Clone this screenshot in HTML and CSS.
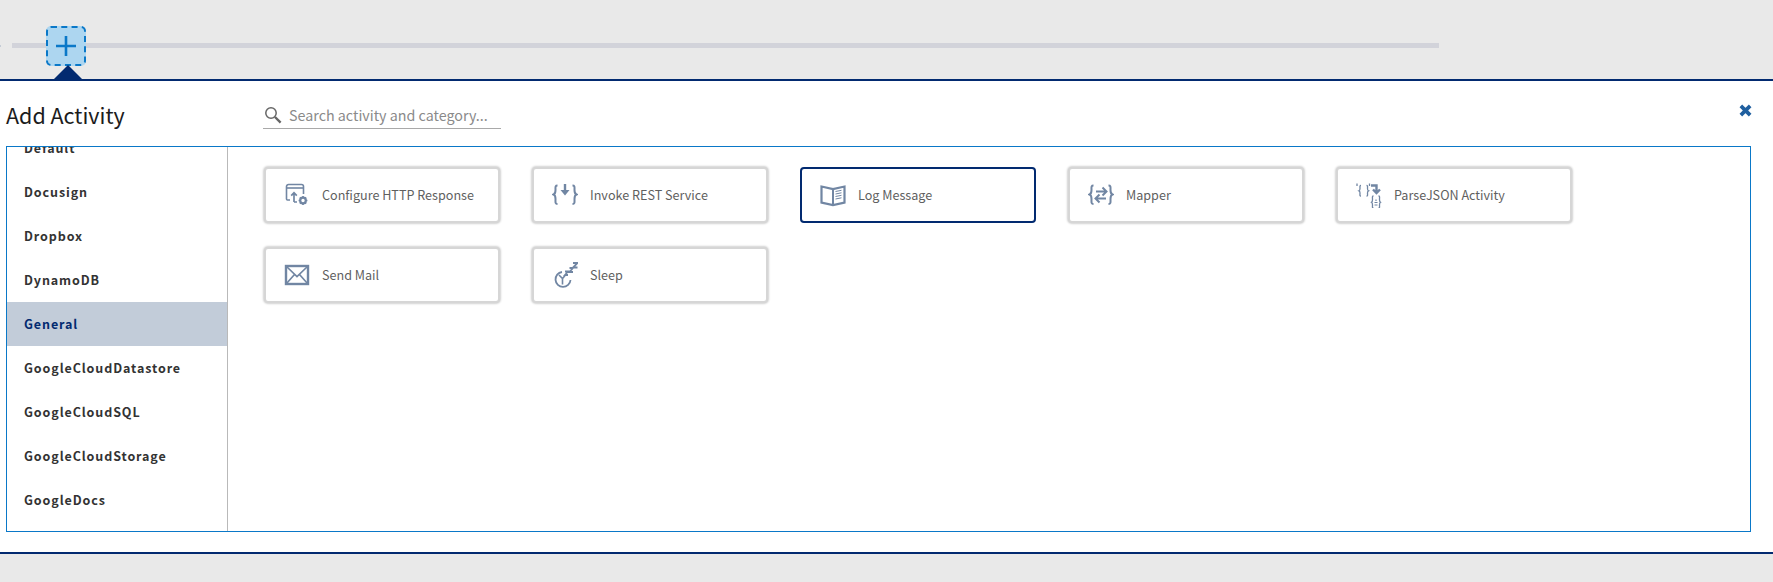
FILE: index.html
```html
<!DOCTYPE html>
<html lang="en">
  <head>
    <meta charset="UTF-8" />
    <title>Add Activity</title>
    <link rel="stylesheet" href="styles.css">
  </head>
  <body>
    <div class="flow-band">
      <span class="track-stub"></span>
      <div class="track"></div>
      <button class="add-btn" type="button">
        <svg width="22" height="22" viewBox="0 0 22 22"><path d="M11 1v20M1 11h20" stroke="#0a78c8" stroke-width="2.600" fill="none"/></svg>
      </button>
      <span class="pointer"></span>
    </div>

    <section class="panel">
      <div class="panel-head">
        <h1>Add Activity</h1>
        <label class="search">
          <svg width="18" height="18" viewBox="0 0 18 18"><circle cx="7" cy="7" r="5.200" stroke="#666" stroke-width="1.500" fill="none"/><path d="M11 11l5.600 5.600" stroke="#666" stroke-width="2.400" fill="none"/></svg>
          <input type="text" placeholder="Search activity and category..." />
        </label>
        <button class="close-btn" type="button" aria-label="Close">
          <svg width="13" height="13" viewBox="0 0 12 12"><path d="M1.700 1.700l8.600 8.600M10.300 1.700l-8.600 8.600" stroke="#1f5f9f" stroke-width="3.400" fill="none"/></svg>
        </button>
      </div>

      <div class="picker">
        <div class="categories">
          <ul>
            <li>Default</li>
            <li>Docusign</li>
            <li>Dropbox</li>
            <li>DynamoDB</li>
            <li class="active">General</li>
            <li>GoogleCloudDatastore</li>
            <li>GoogleCloudSQL</li>
            <li>GoogleCloudStorage</li>
            <li>GoogleDocs</li>
          </ul>
        </div>

        <div class="activities">
          <div class="card">
            <svg class="icon" viewBox="0 0 26 26">
              <path d="M6 18H3.500a1 1 0 0 1-1-1V4.500a2 2 0 0 1 2-2h13a2 2 0 0 1 2 2V12" fill="none" stroke-width="1.600"/>
              <path d="M2.500 6h17" fill="none" stroke-width="1.600"/>
              <path d="M10 20v-9M7.200 13.600L10 10.800l2.800 2.800M10 20h3" fill="none" stroke-width="1.700"/>
              <circle cx="19" cy="18.500" r="2.800" fill="none" stroke-width="2.200"/>
              <path d="M19 14v1.500M19 21.500V23M14.600 18.500h1.500M21.900 18.500h1.500M15.900 15.400l1 1M21.100 20.600l1 1M22.100 15.400l-1 1M16.900 20.600l-1 1" fill="none" stroke-width="1.700"/>
            </svg>
            <span>Configure HTTP Response</span>
          </div>
          <div class="card">
            <svg class="icon" viewBox="0 0 26 26">
              <path d="M5.500 3.500c-2.500 0-2 1.500-2 4.500 0 3-.5 4-2 4.500 1.500.5 2 1.500 2 4.500s-.5 5 2 5M20.500 3.500c2.500 0 2 1.500 2 4.500 0 3 .5 4 2 4.500-1.500.5-2 1.500-2 4.500s.5 5-2 5" fill="none" stroke-width="2"/>
              <path d="M13 2v8" fill="none" stroke-width="2.400"/>
              <path d="M8.500 8h9L13 13.500z" stroke="none" fill="#7186a3"/>
            </svg>
            <span>Invoke REST Service</span>
          </div>
          <div class="card selected">
            <svg class="icon" viewBox="0 0 26 26">
              <path d="M1.500 4.500l11.500 2.500 11.500-2.500v16l-11.500 2.500-11.500-2.500z" fill="none" stroke-width="2.200"/>
              <path d="M13 7v16" fill="none" stroke-width="2"/>
              <path d="M15.500 9.500l6-1.200M15.500 12l6-1.200M15.500 14.500l6-1.200M15.500 17l6-1.200" fill="none" stroke-width="1"/>
            </svg>
            <span>Log Message</span>
          </div>
          <div class="card">
            <svg class="icon" viewBox="0 0 26 26">
              <path d="M5.500 3.500c-2.500 0-2 1.500-2 4.500 0 3-.5 4-2 4.500 1.500.5 2 1.500 2 4.500s-.5 5 2 5M20.500 3.500c2.500 0 2 1.500 2 4.500 0 3 .5 4 2 4.500-1.500.5-2 1.500-2 4.500s.5 5-2 5" fill="none" stroke-width="2"/>
              <path d="M8 9.500h9.500M14.500 5.500l4 4-4 4M18 16.500H8.500M11.500 12.500l-4 4 4 4" fill="none" stroke-width="2"/>
            </svg>
            <span>Mapper</span>
          </div>
          <div class="card">
            <svg class="icon" viewBox="0 0 26 26">
              <path d="M5 3.500c-1.500 0-1 1.500-1 3s-.3 2-1 2.300c.7.3 1 .8 1 2.300s-.5 3 1 3M10.500 3.500c1.500 0 1 1.500 1 3s.3 2 1 2.300c-.7.3-1 .8-1 2.300s.5 3-1 3" fill="none" stroke-width="1.300"/>
              <path d="M1 1.500v2.500M13.500 1.500v2.500" fill="none" stroke-width="1.300"/>
              <path d="M15 3.500h5.500v7M17 7.500l3.500 3.500 3.500-3.500" fill="none" stroke-width="2.400"/>
              <path d="M17.500 14c-1.500 0-1 1.500-1 3.500s-.5 2.500-1 2.800c.5.3 1 .8 1 2.800s-.5 2.900 1 2.900M22.500 14c1.500 0 1 1.500 1 3.500s.5 2.500 1 2.800c-.5.3-1 .8-1 2.800s.5 2.900-1 2.900" fill="none" stroke-width="1.300"/>
              <path d="M20 17.500v1.500M18.500 20.500h3M18.500 23h3" fill="none" stroke-width="1.200"/>
            </svg>
            <span>ParseJSON Activity</span>
          </div>
          <div class="card">
            <svg class="icon" viewBox="0 0 26 26">
              <rect x="2" y="4" width="22" height="18" fill="none" stroke-width="2.400"/>
              <path d="M2.500 4.500l10.500 10 10.500-10M2.500 21.500l8-9M23.500 21.500l-8-9" fill="none" stroke-width="1.700"/>
            </svg>
            <span>Send Mail</span>
          </div>
          <div class="card">
            <svg class="icon" viewBox="0 0 26 26">
              <path d="M10 10a7.500 7.500 0 1 0 8.500 8" fill="none" stroke-width="1.800"/>
              <path d="M7 13l3.500 3.500 3-3.500M10.500 16.500v6" fill="none" stroke-width="1.600"/>
              <path d="M13 9.500h3l-3 3.500h3M17.500 6h3.500l-3.500 4h3.500M21 1h4.500l-4.500 4.500h4.500" fill="none" stroke-width="1.800"/>
            </svg>
            <span>Sleep</span>
          </div>
        </div>
      </div>
    </section>

    <div class="foot-band"></div>
  </body>
</html>
```

FILE: styles.css
```css
* {
  box-sizing: border-box;
}

body {
  font-family: "Noto Sans CJK SC", "Noto Sans", sans-serif;
  margin: 0;
  height: 582px;
  overflow: hidden;
  background: #e9e9e9;
  display: flex;
  flex-direction: column;
}

.flow-band {
  position: relative;
  height: 79px;
  padding: 43px 0 0 12px;
}

.track {
  width: 1427px;
  height: 5px;
  background: #d2d3da;
}

.track-stub {
  position: absolute;
  left: 0;
  top: 45px;
  width: 1px;
  height: 2px;
  background: #c5ccd6;
}

.add-btn {
  position: absolute;
  left: 46px;
  top: 26px;
  width: 40px;
  height: 40px;
  padding: 0;
  display: flex;
  align-items: center;
  justify-content: center;
  background: #add6f0;
  border: 2px dashed #0a78c8;
  border-radius: 5px;
}

.pointer {
  position: absolute;
  left: 54px;
  top: 65px;
  border-left: 14px solid transparent;
  border-right: 14px solid transparent;
  border-bottom: 14px solid #022a70;
}

.panel {
  height: 475px;
  background: #fff;
  border-top: 2px solid #022a70;
  border-bottom: 2px solid #022a70;
  padding: 0 22px 0 6px;
}

.panel-head {
  height: 65px;
  display: flex;
  align-items: flex-start;
}

h1 {
  width: 257px;
  margin: 19px 0 0;
  font-size: 21.500px;
  font-weight: 400;
  line-height: 30px;
  color: #1c1c1c;
}

.search {
  width: 238px;
  height: 27px;
  margin-top: 21px;
  display: flex;
  align-items: center;
  gap: 7px;
  padding-left: 1px;
  border-bottom: 1px solid #a9a9a9;
}

.search input {
  flex: 1;
  min-width: 0;
  border: none;
  outline: none;
  padding: 0 0 1px;
  font-family: inherit;
  font-size: 14.300px;
  background: transparent;
}

.search input::placeholder {
  color: #8a8a8a;
  opacity: 1;
}

.close-btn {
  margin: 23px -1px 0 auto;
  padding: 0;
  border: none;
  background: none;
  line-height: 0;
}

.picker {
  height: 386px;
  display: flex;
  border: 1px solid #0a78c8;
}

.categories {
  width: 221px;
  flex: none;
  overflow: hidden;
  border-right: 1px solid #b9b9b9;
}

.categories ul {
  list-style: none;
  margin: -21px 0 0;
  padding: 0;
}

.categories li {
  height: 44px;
  padding-left: 17px;
  line-height: 44px;
  font-size: 12.500px;
  font-weight: 600;
  letter-spacing: 0.900px;
  color: #333;
}

.categories li.active {
  background: #c2ccd9;
  color: #022a70;
}

.activities {
  flex: 1;
  display: grid;
  grid-template-columns: repeat(auto-fill, 236px);
  grid-auto-rows: 56px;
  column-gap: 32px;
  row-gap: 24px;
  align-content: start;
  padding: 20px 0 0 36px;
}

.card {
  display: flex;
  align-items: center;
  gap: 12px;
  padding: 0 0 1px 18px;
  background: #fff;
  border: 2px solid #d6d6d6;
  border-radius: 4px;
  box-shadow: 0 0 2px 1px rgba(0, 0, 0, 0.18);
  font-size: 12.600px;
  color: #5f5f5f;
}

.card.selected {
  border-color: #022a70;
  box-shadow: none;
}

.icon {
  width: 26px;
  height: 26px;
  flex: none;
  stroke: #7186a3;
}
```
